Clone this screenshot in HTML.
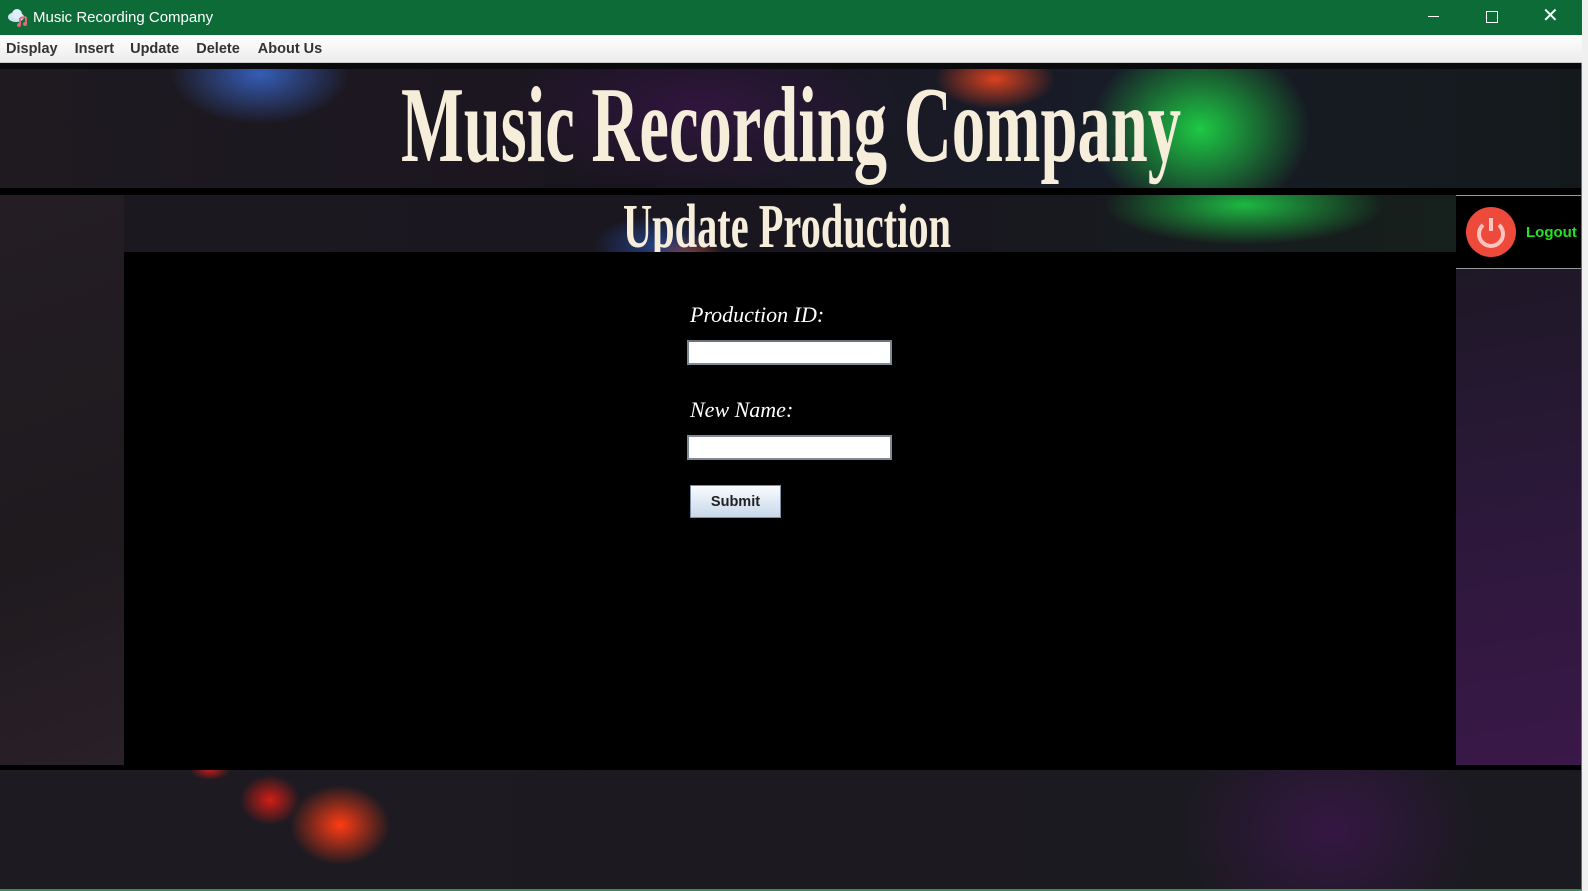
<!DOCTYPE html>
<html><head><meta charset="utf-8"><style>
*{margin:0;padding:0;box-sizing:border-box}
body{width:1588px;height:891px;position:relative;overflow:hidden;background:#f0f0f0;font-family:"Liberation Sans",sans-serif}
.abs{position:absolute}
</style></head><body>
<div class="abs" style="left:0;top:0;width:1582px;height:891px;background:#0a0a0c;border-right:1px solid #3a8a5a"></div>
<div class="abs" style="left:0;top:0;width:1582px;height:35px;background:#0c6b37"></div>
<svg class="abs" style="left:7px;top:8px" width="22" height="20" viewBox="0 0 22 20"><ellipse cx="9" cy="9" rx="8" ry="5" fill="#cfe6f5"/><circle cx="10" cy="6" r="5" fill="#dff0fa"/><path d="M13 10v7M19 9v7M13 10l6-1" stroke="#e06a7a" stroke-width="2" fill="none"/><circle cx="12" cy="17" r="2" fill="#e06a7a"/><circle cx="18" cy="16" r="2" fill="#e06a7a"/></svg>
<div class="abs" style="left:33px;top:9px;color:#fff;font-size:15px">Music Recording Company</div>
<div class="abs" style="left:1428px;top:16px;width:11px;height:1px;background:#fff"></div>
<div class="abs" style="left:1486px;top:11px;width:12px;height:12px;border:1px solid #fff"></div>
<div class="abs" style="left:1542px;top:4px;color:#fff;font-size:20px;line-height:24px">✕</div>
<div class="abs" style="left:0;top:35px;width:1582px;height:28px;background:linear-gradient(#fff,#ececec);border-bottom:1px solid #ccc"></div>
<div class="abs" style="left:6px;top:41px;font-size:14.5px;font-weight:bold;color:#333">
<span>Display</span><span style="margin-left:17px">Insert</span><span style="margin-left:16px">Update</span><span style="margin-left:17px">Delete</span><span style="margin-left:18px">About Us</span></div>
<div class="abs" style="left:0;top:69px;width:1581px;height:119px;background:
radial-gradient(ellipse 90px 50px at 260px 5px,rgba(60,110,220,.8),transparent),
radial-gradient(ellipse 60px 30px at 995px 10px,rgba(240,70,30,.9),transparent),
radial-gradient(ellipse 50px 40px at 920px 160px,rgba(230,60,20,.8),transparent),
radial-gradient(ellipse 110px 90px at 1200px 60px,rgba(30,210,70,.95),transparent),
radial-gradient(ellipse 200px 80px at 700px 40px,rgba(70,20,90,.5),transparent),
linear-gradient(90deg,#1e1a20,#1a1520 40%,#181c28 70%,#141a1c)"></div>
<svg class="abs" style="left:0;top:69px" width="1581" height="119"><text x="401" y="92" textLength="780" lengthAdjust="spacingAndGlyphs" font-family="Liberation Serif,serif" font-weight="bold" font-size="108" fill="#f6eedb">Music Recording Company</text></svg>
<div class="abs" style="left:0;top:188px;width:1581px;height:7px;background:#000"></div>
<div class="abs" style="left:0;top:195px;width:124px;height:570px;background:linear-gradient(160deg,#241e24,#1e1a1e 60%,#2a2028)"></div>
<div class="abs" style="left:124px;top:195px;width:1332px;height:57px;background:
radial-gradient(ellipse 60px 30px at 530px 50px,rgba(40,80,170,.7),transparent),
radial-gradient(ellipse 40px 20px at 560px 60px,rgba(220,70,30,.7),transparent),
radial-gradient(ellipse 140px 40px at 1120px 10px,rgba(30,200,70,.9),transparent),
linear-gradient(90deg,#1c1820,#181620 60%,#16201c)"></div>
<svg class="abs" style="left:124px;top:195px" width="1332" height="57"><text x="499" y="52" textLength="328" lengthAdjust="spacingAndGlyphs" font-family="Liberation Serif,serif" font-weight="bold" font-size="62" fill="#f6eedb">Update Production</text></svg>
<div class="abs" style="left:124px;top:252px;width:1332px;height:513px;background:#000"></div>
<div class="abs" style="left:690px;top:302px;color:#fff;font-family:'Liberation Serif',serif;font-style:italic;font-size:22px">Production ID:</div>
<div class="abs" style="left:687px;top:340px;width:205px;height:25px;background:#fff;border:2px solid #7f8a99;border-top-color:#6c7480"></div>
<div class="abs" style="left:690px;top:397px;color:#fff;font-family:'Liberation Serif',serif;font-style:italic;font-size:22px">New Name:</div>
<div class="abs" style="left:687px;top:435px;width:205px;height:25px;background:#fff;border:2px solid #7f8a99"></div>
<div class="abs" style="left:690px;top:485px;width:91px;height:33px;background:linear-gradient(#fafcfe,#dbe6f2 60%,#c8d8ea);border:1px solid #7a8ea6;font-weight:bold;font-size:14.5px;color:#222;text-align:center;line-height:33px">Submit</div>
<div class="abs" style="left:1456px;top:195px;width:125px;height:570px;background:linear-gradient(170deg,#1a1820,#2a1838 50%,#3a1848)"></div>
<div class="abs" style="left:1456px;top:195px;width:125px;height:74px;background:#000;border-top:1px solid #999;border-bottom:1px solid #999"></div>
<svg class="abs" style="left:1466px;top:207px" width="50" height="50" viewBox="0 0 50 50"><circle cx="25" cy="25" r="25" fill="#ee4a3c"/><path d="M17 18a12 12 0 1 0 16 0" stroke="#ffc4c0" stroke-width="4" fill="none"/><path d="M25 11v13" stroke="#ffc4c0" stroke-width="4"/></svg>
<div class="abs" style="left:1526px;top:224px;color:#22e322;font-weight:bold;font-size:15px">Logout</div>
<div class="abs" style="left:0;top:765px;width:1581px;height:5px;background:#000"></div>
<div class="abs" style="left:0;top:770px;width:1581px;height:119px;background:
radial-gradient(ellipse 50px 40px at 340px 55px,rgba(255,60,20,1),transparent),
radial-gradient(ellipse 30px 25px at 270px 30px,rgba(230,30,20,.9),transparent),
radial-gradient(ellipse 20px 10px at 210px 0px,rgba(230,30,20,.8),transparent),
radial-gradient(ellipse 150px 120px at 1330px 60px,rgba(70,20,90,.6),transparent),
linear-gradient(90deg,#1e1a22,#1c1a20 50%,#1a1a20)"></div>
<div class="abs" style="left:0;top:889px;width:1582px;height:2px;background:#3a8a5a"></div>
</body></html>
